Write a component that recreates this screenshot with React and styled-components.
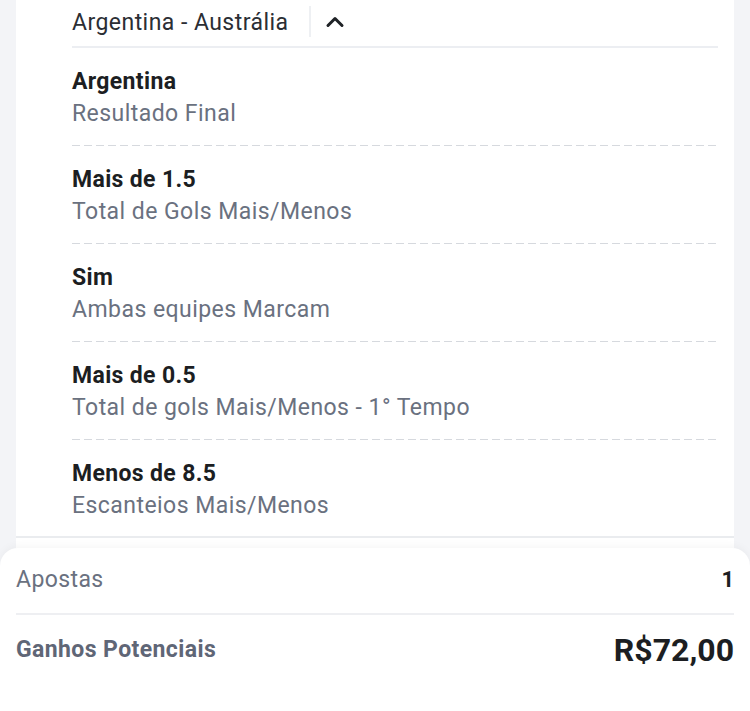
import styled, { createGlobalStyle } from 'styled-components';
import { ChevronUp } from 'lucide-react';

const GlobalStyle = createGlobalStyle`
  html, body {
    margin: 0;
    padding: 0;
    background: #f3f4f7;
    font-family: Roboto, "Liberation Sans", sans-serif;
    -webkit-font-smoothing: antialiased;
  }
`;

const Page = styled.div`
  width: 750px;
  height: 711px;
  overflow: hidden;
  display: flex;
  flex-direction: column;
`;

const Card = styled.div`
  margin: 0 16px;
  background: #fff;
  padding: 0 16px 10px 56px;
`;

const MatchHeader = styled.div`
  display: flex;
  align-items: center;
  height: 46px;
  border-bottom: 2px solid #eceef2;
`;

const MatchName = styled.span`
  font-size: 23px;
  letter-spacing: 0.45px;
  color: #2b2e34;
  margin-top: -2px;
`;

const Separator = styled.span`
  width: 2px;
  height: 31px;
  background: #eef0f3;
  margin: -4px 10px 0 21px;
`;

const Toggle = styled.span`
  display: flex;
  color: #1f2226;
  margin-top: -2px;
`;

const Selection = styled.div`
  padding: 19px 0 15px;
  display: flex;
  flex-direction: column;
  background-image: ${(p) =>
    p.last
      ? 'linear-gradient(#eaecef, #eaecef)'
      : 'repeating-linear-gradient(to right, #d6d9de 0 8px, transparent 8px 12px)'};
  background-size: 100% ${(p) => (p.last ? '2px' : '1.5px')};
  background-position: bottom left;
  background-repeat: no-repeat;
  margin-right: ${(p) => (p.last ? '-16px' : '0')};
  margin-left: ${(p) => (p.last ? '-56px' : '0')};
  padding-left: ${(p) => (p.last ? '56px' : '0')};
`;

const Pick = styled.span`
  font-size: 23px;
  line-height: 30px;
  font-weight: 700;
  color: #1c1e22;
  letter-spacing: 0.35px;
`;

const Market = styled.span`
  font-size: 23px;
  line-height: 34px;
  color: #6a7180;
  letter-spacing: 0.45px;
`;

const Sheet = styled.div`
  background: #fff;
  border-radius: 18px 18px 0 0;
  box-shadow: 0 -2px 8px rgba(0, 0, 0, 0.04);
  padding: 0 16px;
  flex: 1;
`;

const SummaryRow = styled.div`
  display: flex;
  justify-content: space-between;
  align-items: center;
  padding: ${(p) => (p.first ? '16px 0 17px' : '19px 0')};
  border-bottom: ${(p) => (p.first ? '2px solid #eeeff2' : 'none')};
`;

const Label = styled.span`
  font-size: 23px;
  line-height: 32px;
  font-weight: ${(p) => (p.strong ? 700 : 400)};
  color: ${(p) => (p.strong ? '#5f6676' : '#6a7180')};
  letter-spacing: 0.4px;
`;

const Value = styled.span`
  font-size: ${(p) => (p.big ? '32px' : '22px')};
  line-height: 32px;
  font-weight: 700;
  color: #1c1e22;
`;

const selections = [
  { pick: 'Argentina', market: 'Resultado Final' },
  { pick: 'Mais de 1.5', market: 'Total de Gols Mais/Menos' },
  { pick: 'Sim', market: 'Ambas equipes Marcam' },
  { pick: 'Mais de 0.5', market: 'Total de gols Mais/Menos - 1° Tempo' },
  { pick: 'Menos de 8.5', market: 'Escanteios Mais/Menos' },
];

export default function App() {
  return (
    <Page>
      <GlobalStyle />
      <Card>
        <MatchHeader>
          <MatchName>Argentina - Austrália</MatchName>
          <Separator />
          <Toggle>
            <ChevronUp size={28} strokeWidth={2.6} />
          </Toggle>
        </MatchHeader>
        {selections.map((s, i) => (
          <Selection key={s.pick} last={i === selections.length - 1}>
            <Pick>{s.pick}</Pick>
            <Market>{s.market}</Market>
          </Selection>
        ))}
      </Card>
      <Sheet>
        <SummaryRow first>
          <Label>Apostas</Label>
          <Value>1</Value>
        </SummaryRow>
        <SummaryRow>
          <Label strong>Ganhos Potenciais</Label>
          <Value big>R$72,00</Value>
        </SummaryRow>
      </Sheet>
    </Page>
  );
}
